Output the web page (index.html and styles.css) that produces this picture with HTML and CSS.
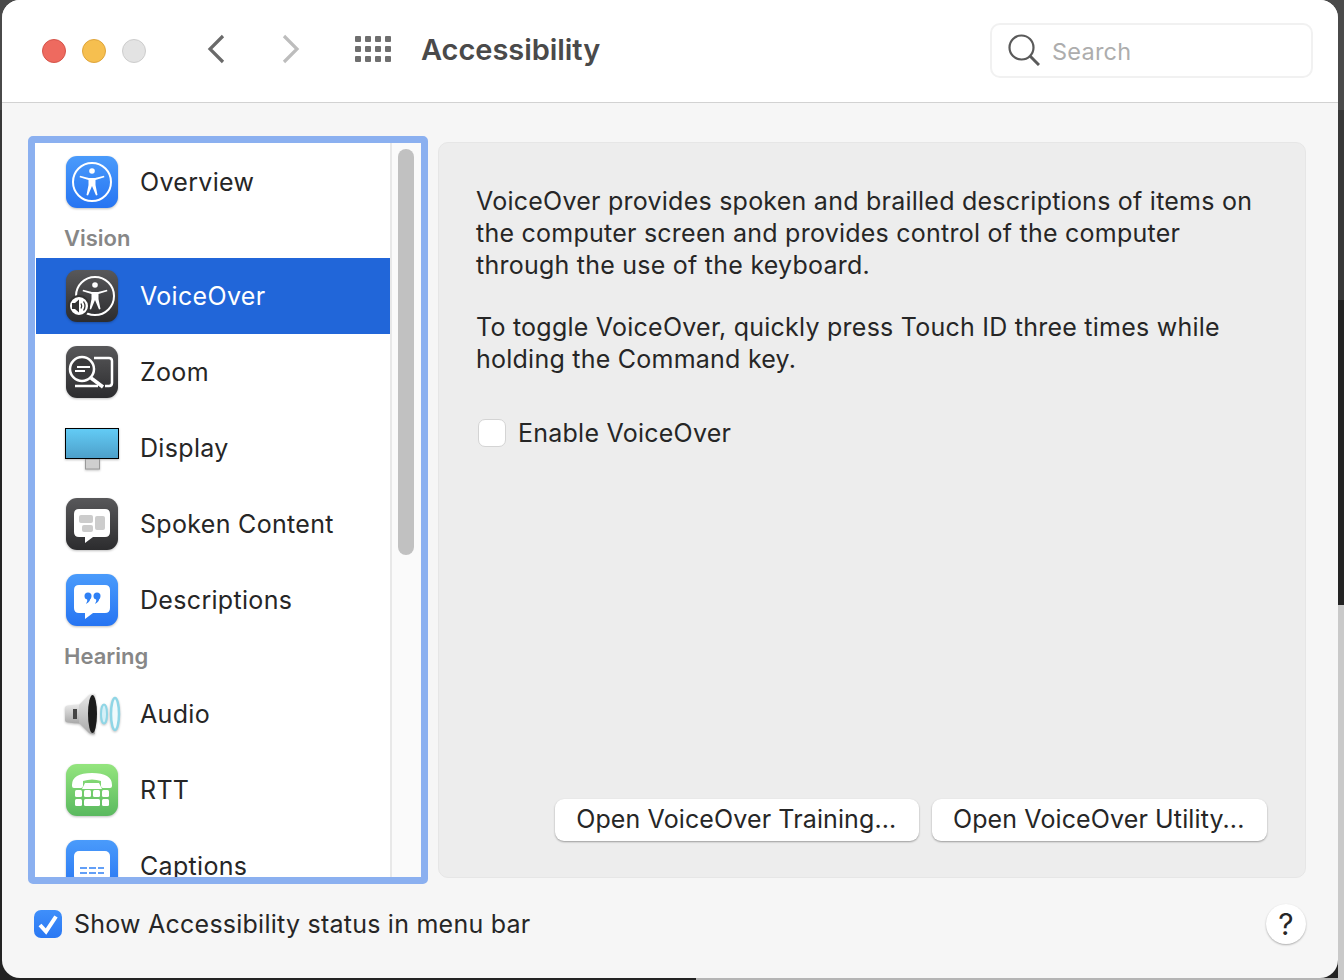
FILE: index.html
```html
<!DOCTYPE html>
<html>
<head>
  <meta charset="utf-8">
  <title>Accessibility</title>
  <link rel="stylesheet" href="styles.css">
</head>
<body>
  <div class="window">
    <div class="titlebar">
      <div class="lights">
        <span class="light red"></span>
        <span class="light yellow"></span>
        <span class="light grey"></span>
      </div>
      <svg class="nav-arrow" width="20" height="30" viewBox="0 0 20 30"><path d="M16 2 L3 15 L16 28" fill="none" stroke="#6a6a6a" stroke-width="3.2"/></svg>
      <svg class="nav-arrow forward" width="20" height="30" viewBox="0 0 20 30"><path d="M3 2 L16 15 L3 28" fill="none" stroke="#bdbdbd" stroke-width="3.2"/></svg>
      <div class="apps">
        <i></i><i></i><i></i><i></i><i></i><i></i><i></i><i></i><i></i><i></i><i></i><i></i>
      </div>
      <h1>Accessibility</h1>
      <div class="search">
        <svg width="32" height="32" viewBox="0 0 32 32"><circle cx="13.5" cy="13.5" r="12" fill="none" stroke="#5a5a5a" stroke-width="2.2"/><path d="M22 22 L31 31" stroke="#5a5a5a" stroke-width="3"/></svg>
        <span>Search</span>
      </div>
    </div>

    <div class="content">
      <div class="main">
        <div class="list-frame">
          <div class="list">
            <div class="row">
              <svg class="icon" viewBox="0 0 52 52"><rect width="52" height="52" rx="11" fill="url(#blue)"/><use href="#person"/></svg>
              Overview
            </div>
            <div class="group">Vision</div>
            <div class="row selected">
              <svg class="icon" viewBox="0 0 52 52"><rect width="52" height="52" rx="11" fill="url(#dark)"/><use href="#person" transform="translate(3 0)"/><circle cx="13" cy="36" r="10" fill="#fff" stroke="#333" stroke-width="2"/><path d="M6 33h3l4-3.500v13L9 39H6z" fill="#333"/><path d="M15 33.500q1.500 2.500 0 5M17.500 31.500q3 4.500 0 9" fill="none" stroke="#333" stroke-width="1.300"/></svg>
              VoiceOver
            </div>
            <div class="row">
              <svg class="icon" viewBox="0 0 52 52"><rect width="52" height="52" rx="11" fill="url(#dark)"/><path d="M28 12h15q3 0 3 3v22q0 3-3 3h-4M9 40h23" fill="none" stroke="#fff" stroke-width="2.5"/><circle cx="16" cy="23" r="12" fill="#3a3a3c" stroke="#fff" stroke-width="2.5"/><path d="M25 32l12 9" stroke="#fff" stroke-width="3.5"/><path d="M11 21h13M9 25h10" stroke="#fff" stroke-width="2"/></svg>
              Zoom
            </div>
            <div class="row">
              <svg class="icon" viewBox="0 0 52 52"><rect x="19.500" y="37" width="14" height="10" fill="#cfcfcf" stroke="#999"/><rect x="-0.500" y="6.500" width="53" height="30" fill="url(#screen)" stroke="#000"/></svg>
              Display
            </div>
            <div class="row">
              <svg class="icon" viewBox="0 0 52 52"><rect width="52" height="52" rx="11" fill="url(#dark)"/><path d="M13 11h26q5 0 5 5v18q0 5-5 5H27l-8 6v-6h-6q-5 0-5-5V16q0-5 5-5z" fill="#fff"/><rect x="13" y="17" width="14" height="8" rx="2" fill="#ccc"/><rect x="16" y="27" width="11" height="7" rx="2" fill="#ccc"/><rect x="29" y="18" width="10" height="14" rx="2" fill="#ccc"/></svg>
              Spoken Content
            </div>
            <div class="row">
              <svg class="icon" viewBox="0 0 52 52"><rect width="52" height="52" rx="11" fill="url(#blue)"/><path d="M13 11h26q5 0 5 5v18q0 5-5 5H27l-8 6v-6h-6q-5 0-5-5V16q0-5 5-5z" fill="#fff"/><circle cx="22" cy="22" r="3.5" fill="#2f80f5"/><path d="M25 22q0 5-5 8q2-3 1-6z" fill="#2f80f5"/><circle cx="31" cy="22" r="3.5" fill="#2f80f5"/><path d="M34 22q0 5-5 8q2-3 1-6z" fill="#2f80f5"/></svg>
              Descriptions
            </div>
            <div class="group">Hearing</div>
            <div class="row">
              <svg class="icon" viewBox="0 0 52 52"><path d="M-1 20q0-2 3-2.500q6-1 12-1v19q-6 0-12-1q-3-.5-3-2.500z" fill="url(#cone)"/><rect x="7" y="21" width="4" height="10" fill="#444"/><path d="M13 17L23 7q3-2 6-1v40q-3 1-6-1L13 35z" fill="url(#cone)"/><ellipse cx="26.500" cy="26" rx="4.500" ry="19" fill="#1c1c1c"/><ellipse cx="38" cy="26" rx="3" ry="9.500" fill="#d5f0f7" stroke="#8fd6e6" stroke-width="2"/><ellipse cx="49" cy="26" rx="4" ry="16" fill="#f0fafc" stroke="#8fd6e6" stroke-width="2.500"/></svg>
              Audio
            </div>
            <div class="row">
              <svg class="icon" viewBox="0 0 52 52"><rect width="52" height="52" rx="11" fill="url(#green)"/><path d="M6 21q0-12 20-12t20 12v1q0 2-2 2h-7q-2 0-2-2v-5q-9-3-18 0v5q0 2-2 2H8q-2 0-2-2z" fill="#fff"/><path d="M19 19h14l3 6H16z" fill="#fff"/><g fill="#fff"><rect x="9" y="26" width="7" height="7" rx="1.500"/><rect x="18" y="26" width="7" height="7" rx="1.500"/><rect x="27" y="26" width="7" height="7" rx="1.500"/><rect x="36" y="26" width="7" height="7" rx="1.500"/><rect x="9" y="35" width="7" height="7" rx="1.500"/><rect x="18" y="35" width="16" height="7" rx="1.500"/><rect x="36" y="35" width="7" height="7" rx="1.500"/></g></svg>
              RTT
            </div>
            <div class="row">
              <svg class="icon" viewBox="0 0 52 52"><rect width="52" height="52" rx="11" fill="url(#blue)"/><rect x="8" y="11" width="36" height="30" rx="5" fill="#fff"/><path d="M14 28h24M14 33h24" stroke="#2f80f5" stroke-width="1.500" stroke-dasharray="7 2"/></svg>
              Captions
            </div>
          </div>
          <div class="scroll-track"><div class="scroll-thumb"></div></div>
        </div>

        <div class="panel">
          <p class="desc">VoiceOver provides spoken and brailled descriptions of items on the computer screen and provides control of the computer through the use of the keyboard.</p>
          <p class="desc">To toggle VoiceOver, quickly press Touch ID three times while holding the Command key.</p>
          <div class="check-row">
            <span class="checkbox"></span>
            Enable VoiceOver
          </div>
          <div class="buttons">
            <div class="button">Open VoiceOver Training...</div>
            <div class="button">Open VoiceOver Utility...</div>
          </div>
        </div>
      </div>

      <div class="footer">
        <span class="checkbox checked">
          <svg width="28" height="28" viewBox="0 0 28 28"><path d="M6 15 L12 21.500 L22 6.500" fill="none" stroke="#fff" stroke-width="4"/></svg>
        </span>
        Show Accessibility status in menu bar
        <div class="help">?</div>
      </div>
    </div>
  </div>

  <svg width="0" height="0" class="defs">
    <defs>
      <linearGradient id="blue" x1="0" y1="0" x2="0" y2="1"><stop offset="0" stop-color="#4a9bfb"/><stop offset="1" stop-color="#2674f2"/></linearGradient>
      <linearGradient id="dark" x1="0" y1="0" x2="0" y2="1"><stop offset="0" stop-color="#58585a"/><stop offset="1" stop-color="#2c2c2e"/></linearGradient>
      <linearGradient id="green" x1="0" y1="0" x2="0" y2="1"><stop offset="0" stop-color="#94e57e"/><stop offset="1" stop-color="#5ab95f"/></linearGradient>
      <linearGradient id="screen" x1="0" y1="0" x2="0" y2="1"><stop offset="0" stop-color="#63ccf6"/><stop offset="1" stop-color="#4d9fc9"/></linearGradient>
      <linearGradient id="cone" x1="0" y1="0" x2="0" y2="1"><stop offset="0" stop-color="#e8e8e8"/><stop offset="1" stop-color="#a8a8a8"/></linearGradient>
      <g id="person">
        <circle cx="26" cy="26" r="19" fill="none" stroke="#fff" stroke-width="2"/>
        <circle cx="26" cy="15" r="2.800" fill="#fff"/>
        <path d="M14 19.800 L23 22 H29 L38 19.800 L38.400 21.200 L29.500 24 V29 L31.500 39 L30 39.400 L26 30 L22 39.400 L20.500 39 L22.500 29 V24 L13.600 21.200 Z" fill="#fff"/>
      </g>
    </defs>
  </svg>
</body>
</html>
```

FILE: styles.css
```css
body {
  margin: 0;
  padding: 0 6px 2px 2px;
  height: 978px;
  overflow: hidden;
  background:
    linear-gradient(#c9c9c9, #c9c9c9) right bottom / 6px 375px no-repeat,
    linear-gradient(#b4b4b4, #b4b4b4) right bottom / 648px 2px no-repeat,
    linear-gradient(#4a4a4a 110px, #383838 110px, #383838 300px, #232323 300px);
  font-family: Inter, "Noto Sans", sans-serif;
  font-size: 25px;
  letter-spacing: 0.24px;
  color: #262626;
}

.defs {
  display: block;
}

.window {
  height: 978px;
  display: flex;
  flex-direction: column;
  background-color: #f6f6f6;
  border-radius: 18px;
  overflow: hidden;
}

/* title bar */
.titlebar {
  height: 102px;
  flex: none;
  display: flex;
  align-items: center;
  background-color: #fff;
  border-bottom: 1px solid #d2d2d2;
}

.lights {
  display: flex;
  gap: 16px;
  margin-left: 40px;
  margin-right: 61px;
}

.light {
  width: 24px;
  height: 24px;
  border-radius: 50%;
  box-sizing: border-box;
  border: 1px solid;
}

.light.red {
  background-color: #ee6a5f;
  border-color: #d5544a;
}

.light.yellow {
  background-color: #f6bf4f;
  border-color: #dfa53b;
}

.light.grey {
  background-color: #e3e3e3;
  border-color: #cdcdcd;
}

.nav-arrow {
  margin-top: -4px;
}

.nav-arrow.forward {
  margin-left: 54px;
}

.apps {
  display: grid;
  grid-template-columns: repeat(4, 6px);
  grid-auto-rows: 6px;
  gap: 4px;
  margin-left: 54px;
  margin-top: -4px;
}

.apps i {
  background-color: #6f6f6f;
  border-radius: 1px;
}

h1 {
  margin: -4px 0 0 30px;
  font-size: 29px;
  font-weight: 600;
  color: #4a4a4a;
  letter-spacing: -0.05px;
}

.search {
  margin-left: auto;
  margin-right: 25px;
  margin-top: -2px;
  width: 323px;
  height: 55px;
  box-sizing: border-box;
  display: flex;
  align-items: center;
  gap: 12px;
  padding-left: 16px;
  border: 2px solid #f1f1f1;
  border-radius: 10px;
  font-size: 23.5px;
  color: #adadad;
}

.search span {
  padding-top: 2px;
}

/* body of the window */
.content {
  flex: 1;
  display: flex;
  flex-direction: column;
  padding: 33px 32px 0 26px;
}

.main {
  display: flex;
  gap: 10px;
  height: 748px;
}

.list-frame {
  width: 400px;
  box-sizing: border-box;
  display: flex;
  flex: none;
  overflow: hidden;
  background-color: #fff;
  border: 7px solid #8bb0f0;
  border-radius: 5px;
}

.list {
  flex: 1;
  min-width: 0;
  height: 734px;
  overflow: hidden;
  padding-top: 1px;
  box-sizing: border-box;
  padding-left: 1px;
  letter-spacing: 0.32px;
}

.row {
  height: 76px;
  display: flex;
  align-items: center;
  gap: 22px;
  padding-left: 30px;
}

.row.selected {
  background-color: #2166d9;
  color: #fff;
}

.icon {
  width: 52px;
  height: 52px;
  flex: none;
  overflow: visible;
  filter: drop-shadow(0 1px 1px rgba(0, 0, 0, 0.25));
}

.group {
  height: 38px;
  line-height: 36px;
  padding-left: 28px;
  font-size: 22px;
  font-weight: 600;
  letter-spacing: 0;
  color: #878787;
}

.scroll-track {
  width: 31px;
  flex: none;
  box-sizing: border-box;
  background-color: #fafafa;
  border-left: 2px solid #e8e8e8;
  padding: 6px 5px 0 6px;
}

.scroll-thumb {
  width: 16px;
  height: 406px;
  background-color: #c1c1c1;
  border-radius: 8px;
}

.panel {
  flex: 1;
  margin-top: 6px;
  height: 736px;
  box-sizing: border-box;
  display: flex;
  flex-direction: column;
  padding: 42px 38px 36px 37px;
  background-color: #ededed;
  border: 1px solid #e6e6e6;
  border-radius: 10px;
}

.desc {
  margin: 0 0 30px;
  line-height: 32px;
}

.check-row {
  display: flex;
  align-items: center;
  gap: 12px;
  margin-left: 2px;
  margin-top: 13px;
}

.checkbox {
  width: 28px;
  height: 28px;
  flex: none;
  box-sizing: border-box;
  background-color: #fff;
  border: 1px solid #d4d4d4;
  border-radius: 7px;
}

.checkbox.checked {
  border: none;
  background: linear-gradient(#3f8ffa, #2a78f3);
}

.checkbox.checked svg {
  display: block;
}

.buttons {
  margin-top: auto;
  display: flex;
  justify-content: flex-end;
  gap: 13px;
}

.button {
  height: 42px;
  line-height: 40px;
  padding: 0 22.5px 0 21px;
  letter-spacing: 0.12px;
  background-color: #fff;
  border-radius: 9px;
  box-shadow: 0 1px 2px rgba(0, 0, 0, 0.35);
}

.footer {
  flex: 1;
  display: flex;
  align-items: center;
  gap: 12px;
  padding: 0 0 14px 6px;
}

.help {
  margin-left: auto;
  width: 40px;
  height: 40px;
  line-height: 40px;
  text-align: center;
  font-size: 30px;
  background-color: #fff;
  border-radius: 50%;
  box-shadow: 0 1px 2px rgba(0, 0, 0, 0.3);
}
```
